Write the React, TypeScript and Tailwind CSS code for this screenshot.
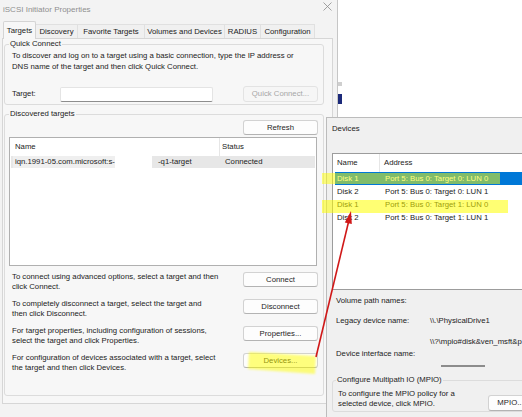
import React from "react";

function Btn({
  children,
  className = "",
  disabled = false,
}: {
  children: React.ReactNode;
  className?: string;
  disabled?: boolean;
}) {
  return (
    <div
      className={`flex items-center justify-center rounded-[3px] border ${
        disabled
          ? "border-[#e3e3e3] bg-[#f6f6f6] text-[#a6a6a6]"
          : "border-[#d2d2d2] border-b-[#b3b3b3] bg-[#fdfdfd] text-[#1e1e1e]"
      } ${className}`}
    >
      {children}
    </div>
  );
}

const tabs: { label: string; w: string; sel?: boolean }[] = [
  { label: "Targets", w: "w-[33px]", sel: true },
  { label: "Discovery", w: "w-[42px]" },
  { label: "Favorite Targets", w: "w-[67px]" },
  { label: "Volumes and Devices", w: "w-[80px]" },
  { label: "RADIUS", w: "w-[36px]" },
  { label: "Configuration", w: "w-[54px]" },
];

const actions: [string, string, string][] = [
  ["To connect using advanced options, select a target and then", "click Connect.", "Connect"],
  ["To completely disconnect a target, select the target and", "then click Disconnect.", "Disconnect"],
  ["For target properties, including configuration of sessions,", "select the target and click Properties.", "Properties..."],
  ["For configuration of devices associated with a target, select", "the target and then click Devices.", "Devices..."],
];

const disks: [string, string][] = [
  ["Disk 1", "Port 5: Bus 0: Target 0: LUN 0"],
  ["Disk 2", "Port 5: Bus 0: Target 0: LUN 1"],
  ["Disk 1", "Port 5: Bus 0: Target 1: LUN 0"],
  ["Disk 2", "Port 5: Bus 0: Target 1: LUN 1"],
];

export default function App() {
  return (
    <div className="relative w-[522px] h-[417px] overflow-hidden bg-white font-['Liberation_Sans',Arial,sans-serif] text-[7.75px] leading-[10px] text-[#222]">
      {/* bits of another window behind */}
      <div className="absolute left-[338px] top-[82px] w-[4px] h-[4px] bg-[#cfcfcf]" />
      <div className="absolute left-[338px] top-[94px] w-[4px] h-[10px] bg-[#1c2a7a]" />

      {/* Main window */}
      <div className="absolute left-0 top-0 w-[338px] h-[417px] bg-[#f3f3f3] border-r border-[#c6c6c6] flex flex-col">
        {/* title bar */}
        <div className="h-[21px] shrink-0 flex items-start">
          <span className="ml-[3px] mt-[5px] text-[8px] text-[#8f8f8f]">iSCSI Initiator Properties</span>
          <svg className="ml-auto mr-[5px] mt-[2px]" width="9" height="9" viewBox="0 0 9 9">
            <path d="M0.5 0.5 L8.5 8.5 M8.5 0.5 L0.5 8.5" stroke="#8a8a8a" strokeWidth="0.8" />
          </svg>
        </div>

        {/* tabs */}
        <div className="h-[17px] shrink-0 flex items-end pl-[3px] relative z-10">
          {tabs.map((t) =>
            t.sel ? (
              <div
                key={t.label}
                className={`${t.w} h-[18px] -mb-px flex items-center justify-center border border-b-0 border-[#d4d4d4] bg-[#f7f7f7] rounded-t-[2px]`}
              >
                {t.label}
              </div>
            ) : (
              <div
                key={t.label}
                className={`${t.w} h-[14px] flex items-center justify-center border-t border-r border-[#e0e0e0] bg-[#f0f0f0] pt-[1px]`}
              >
                {t.label}
              </div>
            )
          )}
        </div>

        {/* tab page */}
        <div className="ml-[2px] w-[331px] h-[366px] shrink-0 border border-[#d6d6d6] bg-[#f7f7f7] flex flex-col">
          {/* Quick Connect */}
          <fieldset className="ml-[1px] w-[320px] border border-[#dcdcdc] rounded-[3px]">
            <legend className="ml-[4px] px-[1px] leading-[10px]">Quick Connect</legend>
            <div className="pl-[7px] pr-[5px] pb-[2px] flex flex-col">
              <div className="pt-[1px] leading-[11px]">
                <div>To discover and log on to a target using a basic connection, type the IP address or</div>
                <div>DNS name of the target and then click Quick Connect.</div>
              </div>
              <div className="mt-[14px] h-[16px] flex items-center">
                <span className="w-[48px]">Target:</span>
                <div className="w-[153px] h-[15px] bg-white border border-[#e4e4e4] border-b-[#8d8d8d] rounded-[2px]" />
                <Btn disabled className="ml-auto w-[75px] h-[16px]">
                  Quick Connect...
                </Btn>
              </div>
            </div>
          </fieldset>

          {/* Discovered targets */}
          <fieldset className="ml-[1px] mt-[4px] w-[320px] border border-[#dcdcdc] rounded-[3px]">
            <legend className="ml-[4px] px-[1px] leading-[10px]">Discovered targets</legend>
            <div className="pl-[4px] pr-[5px] pb-[22px] flex flex-col">
              <div className="mt-[1px] flex justify-end">
                <Btn className="w-[75px] h-[15px]">Refresh</Btn>
              </div>
              <div className="mt-[2px] w-[308px] h-[129px] bg-white border border-[#b0b0b0] flex flex-col">
                <div className="h-[18px] flex items-center">
                  <div className="w-[210px] h-full flex items-center pl-[5px] border-r border-[#e6e6e6]">Name</div>
                  <div className="pl-[2px]">Status</div>
                </div>
                <div className="mx-[1px] h-[12px] flex items-center bg-[#e7e7e7]">
                  <div className="ml-[2px] pl-[2px] w-[102px] h-full flex items-center bg-[#efefef] whitespace-nowrap overflow-hidden">
                    iqn.1991-05.com.microsoft:s-
                  </div>
                  <div className="w-[37px] h-full bg-white" />
                  <div className="ml-[6px] w-[67px]">-q1-target</div>
                  <div>Connected</div>
                </div>
              </div>

              <div className="mt-[6px] pl-[3px] flex flex-col gap-[7px]">
                {actions.map(([l1, l2, b]) => (
                  <div key={b} className="h-[20px] flex items-start">
                    <div className="flex flex-col whitespace-nowrap">
                      <div>{l1}</div>
                      <div>{l2}</div>
                    </div>
                    <Btn className="ml-auto w-[75px] h-[15px]">{b}</Btn>
                  </div>
                ))}
              </div>
            </div>
          </fieldset>
        </div>
      </div>

      {/* Devices dialog */}
      <div className="absolute left-[326px] top-[117px] w-[200px] h-[300px] bg-[#f0f0f0] border-l border-t border-[#bcbcbc] flex flex-col">
        <div className="h-[35px] shrink-0 pl-[5px] pt-[6px]">Devices</div>
        <div className="ml-[5px] w-[200px] h-[137px] shrink-0 bg-white border-l border-t border-b border-[#9c9c9c] flex flex-col">
          <div className="h-[18px] flex items-center">
            <div className="w-[47px] h-full flex items-center pl-[4px] border-r border-[#e6e6e6]">Name</div>
            <div className="pl-[4px]">Address</div>
          </div>
          {disks.map(([n, a], i) => (
            <div
              key={i}
              className={`mx-[2px] h-[13px] flex items-center whitespace-nowrap ${i === 0 ? "bg-[#0078d7] text-white" : ""}`}
            >
              <div className="w-[45px] pl-[2px]">{n}</div>
              <div className="pl-[5px]">{a}</div>
            </div>
          ))}
        </div>

        <div className="pl-[9px] flex flex-col whitespace-nowrap">
          <div className="mt-[6px]">Volume path names:</div>
          <div className="mt-[10px] flex">
            <div className="w-[94px]">Legacy device name:</div>
            <div>\\.\PhysicalDrive1</div>
          </div>
          <div className="mt-[11px] ml-[94px]">\\?\mpio#disk&amp;ven_msft&amp;p</div>
          <div className="mt-[2px]">Device interface name:</div>
          <div className="mt-[6px] ml-[105px] w-[44px] h-[2px] bg-[#8c8c8c]" />
        </div>

        <fieldset className="ml-[5px] mt-[8px] w-[200px] border border-[#dcdcdc] rounded-[3px]">
          <legend className="ml-[3px] px-[1px] leading-[10px]">Configure Multipath IO (MPIO)</legend>
          <div className="pl-[5px] pt-[4px] flex items-start whitespace-nowrap">
            <div className="w-[150px] flex flex-col">
              <div>To configure the MPIO policy for a</div>
              <div>selected device, click MPIO.</div>
            </div>
            <Btn className="mt-[6px] w-[45px] h-[16px]">MPIO...</Btn>
          </div>
        </fieldset>
      </div>

      {/* annotations: highlighter strokes and red arrow */}
      <svg className="absolute left-0 top-0 pointer-events-none" width="522" height="417" viewBox="0 0 522 417">
        <defs>
          <filter id="blur1">
            <feGaussianBlur stdDeviation="1" />
          </filter>
        </defs>
        <rect x="322" y="173" width="178" height="11" fill="#ffff00" opacity="0.5" />
        <rect x="322" y="200" width="186" height="13" fill="#ffff00" opacity="0.55" />
        <polygon points="249,352 316,356 315,374 248,369" fill="#ffff00" opacity="0.5" filter="url(#blur1)" />
        <line x1="316" y1="357" x2="349" y2="220" stroke="#d01818" strokeWidth="1.6" />
        <polygon points="351,211 344.8,222.5 351.8,224" fill="#d01818" />
      </svg>
    </div>
  );
}
